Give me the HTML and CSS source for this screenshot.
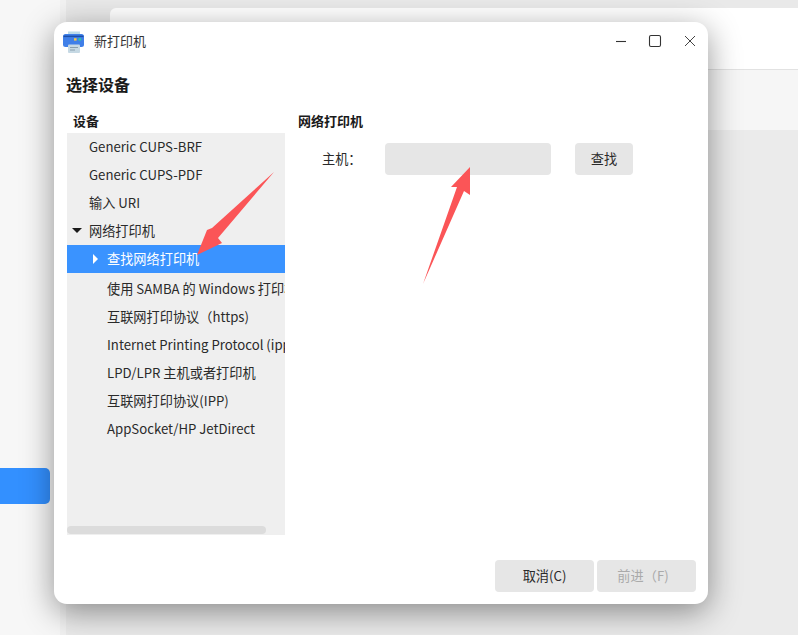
FILE: index.html
```html
<!DOCTYPE html>
<html lang="zh-CN">
<head>
<meta charset="utf-8">
<title>新打印机</title>
<link rel="stylesheet" href="styles.css">
</head>
<body>
<div class="desktop">
  <aside class="side"><div class="side-active"></div></aside>
  <main class="back">
    <div class="back-card"></div>
    <div class="back-band"></div>
    <div class="back-rest"></div>
  </main>
  <section class="dialog">
    <header class="titlebar">
      <svg class="app-icon" width="24" height="24" viewBox="0 0 24 24">
        <rect x="5" y="2.5" width="12" height="4" fill="#bcdcea"/>
        <rect x="0" y="5" width="21" height="13" rx="2.5" fill="#3f7fe8"/>
        <rect x="0.5" y="6.6" width="20" height="1.5" fill="#1d4fa8"/>
        <rect x="11" y="9.2" width="2.6" height="2.4" fill="#f5c84a"/>
        <rect x="15.5" y="9.2" width="2.6" height="2.4" fill="#2ecf9a"/>
        <rect x="5" y="15.5" width="12" height="8.5" rx="1" fill="#c6d9e4"/>
        <rect x="7" y="18" width="8" height="1" fill="#8aa0ae"/>
        <rect x="7" y="20.5" width="5" height="1" fill="#8aa0ae"/>
      </svg>
      <span class="title">新打印机</span>
      <div class="win-controls">
        <svg width="12" height="12" viewBox="0 0 12 12"><path d="M2 6.5h10" stroke="#333" stroke-width="1.1" fill="none"/></svg>
        <svg width="14" height="14" viewBox="0 0 14 14"><rect x="1.5" y="1.5" width="11" height="11" rx="1.5" stroke="#333" stroke-width="1.1" fill="none"/></svg>
        <svg width="12" height="12" viewBox="0 0 12 12"><path d="M1 1l10 10M11 1L1 11" stroke="#444" stroke-width="1" fill="none"/></svg>
      </div>
    </header>
    <h1 class="heading">选择设备</h1>
    <div class="columns">
      <div class="device-col">
        <div class="col-label">设备</div>
        <div class="tree">
          <div class="row">Generic CUPS-BRF</div>
          <div class="row">Generic CUPS-PDF</div>
          <div class="row">输入 URI</div>
          <div class="row"><i class="tri-down"></i>网络打印机</div>
          <div class="row sub selected"><i class="tri-right"></i>查找网络打印机</div>
          <div class="row sub later">使用 SAMBA 的 Windows 打印机</div>
          <div class="row sub later">互联网打印协议（https)</div>
          <div class="row sub later">Internet Printing Protocol (ipps)</div>
          <div class="row sub later">LPD/LPR 主机或者打印机</div>
          <div class="row sub later">互联网打印协议(IPP)</div>
          <div class="row sub later">AppSocket/HP JetDirect</div>
          <div class="scroll-thumb"></div>
        </div>
      </div>
      <div class="detail-col">
        <div class="detail-title">网络打印机</div>
        <div class="host-row">
          <label class="host-label">主机：</label>
          <div class="host-input"></div>
          <button class="btn find">查找</button>
        </div>
      </div>
    </div>
    <footer class="footer">
      <button class="btn foot">取消(C)</button>
      <button class="btn foot off">前进（F)</button>
    </footer>
  </section>
  <svg class="arrows" width="798" height="635" viewBox="0 0 798 635">
    <polygon fill="#fb5557" points="274,172 218,238 222,243 197,255 207,230 212,228"/>
    <polygon fill="#fb5557" points="423,284 457,187 451,187 470,167 470,195 464,191"/>
  </svg>
</div>
</body>
</html>
```
FILE: styles.css
```css
* { box-sizing: border-box; }
html, body { margin: 0; height: 100%; }
body { font-family: "Noto Sans CJK SC", "Noto Sans", sans-serif; font-size: 13.2px; color: #2a2a2a; overflow: hidden; }
.desktop { position: relative; width: 798px; height: 635px; display: flex; overflow: hidden; background: #ebebeb; }
.side { width: 66px; flex: none; background: #f7f7f7; border-right: 6px solid #f2f2f2; padding-top: 468px; }
.side-active { width: 50px; height: 36px; background: #3390ff; border-radius: 0 5px 5px 0; }
.back { flex: 1; padding: 8px 0 0 44px; display: flex; flex-direction: column; background: #e9e9e9; }
.back-card { height: 62px; background: #fff; border-bottom: 1px solid #e2e2e2; border-top-left-radius: 6px; }
.back-band { height: 60px; background: #f6f6f6; margin-left: -44px; }
.back-rest { flex: 1; background: #ebebeb; margin-left: -44px; }
.dialog { position: absolute; left: 54px; top: 22px; width: 654px; height: 582px; background: #fff; border-radius: 13px; box-shadow: 0 8px 32px rgba(0,0,0,.42); display: flex; flex-direction: column; padding: 0 12px 12px 13px; }
.titlebar { height: 38px; display: flex; align-items: center; flex: none; margin-left: -4px; margin-right: -1px; }
.app-icon { flex: none; }
.title { margin-left: 7px; padding-bottom: 2px; font-size: 13px; color: #333; }
.win-controls { margin-left: auto; display: flex; align-items: center; gap: 22px; padding-right: 1px; }
.heading { margin: 12px 0 0 -1px; font-size: 16px; line-height: 24px; font-weight: 700; color: #1a1a1a; }
.columns { display: flex; flex: 1; margin-top: 15px; min-height: 0; }
.device-col { width: 218px; flex: none; display: flex; flex-direction: column; }
.col-label { font-size: 13px; font-weight: 700; padding-left: 6px; line-height: 20px; height: 22px; color: #1a1a1a; }
.tree { position: relative; width: 218px; height: 402px; background: #efefef; overflow: hidden; }
.row { height: 28px; line-height: 27px; padding-left: 22px; white-space: nowrap; overflow: hidden; position: relative; }
.row.sub { padding-left: 40px; }
.row.later { line-height: 32px; }
.row.selected { background: #3a93ff; color: #fff; }
.tri-down { position: absolute; left: 5px; top: 11px; width: 0; height: 0; border-left: 5px solid transparent; border-right: 5px solid transparent; border-top: 5px solid #1a1a1a; }
.tri-right { position: absolute; left: 26px; top: 9px; width: 0; height: 0; border-top: 5px solid transparent; border-bottom: 5px solid transparent; border-left: 5px solid #fff; }
.scroll-thumb { position: absolute; left: 0; bottom: 1px; width: 199px; height: 8px; border-radius: 4px; background: #dcdcdc; }
.detail-col { margin-left: 13px; flex: 1; }
.detail-title { font-size: 13px; font-weight: 700; line-height: 20px; color: #1a1a1a; }
.host-row { display: flex; align-items: center; margin-top: 12px; }
.host-label { width: 87px; padding-left: 24px; padding-bottom: 2px; flex: none; }
.host-input { width: 166px; height: 32px; background: #e6e6e6; border-radius: 4px; }
.btn { border: 0; font: inherit; background: #e6e6e6; color: #2a2a2a; border-radius: 4px; padding: 0 0 2px; }
.find { width: 58px; height: 32px; margin-left: 24px; }
.footer { display: flex; justify-content: flex-end; gap: 3px; flex: none; margin-top: 25px; }
.foot { width: 99px; height: 32px; }
.off { color: #aaa; padding-right: 7px; }
.arrows { position: absolute; left: 0; top: 0; pointer-events: none; }
```
